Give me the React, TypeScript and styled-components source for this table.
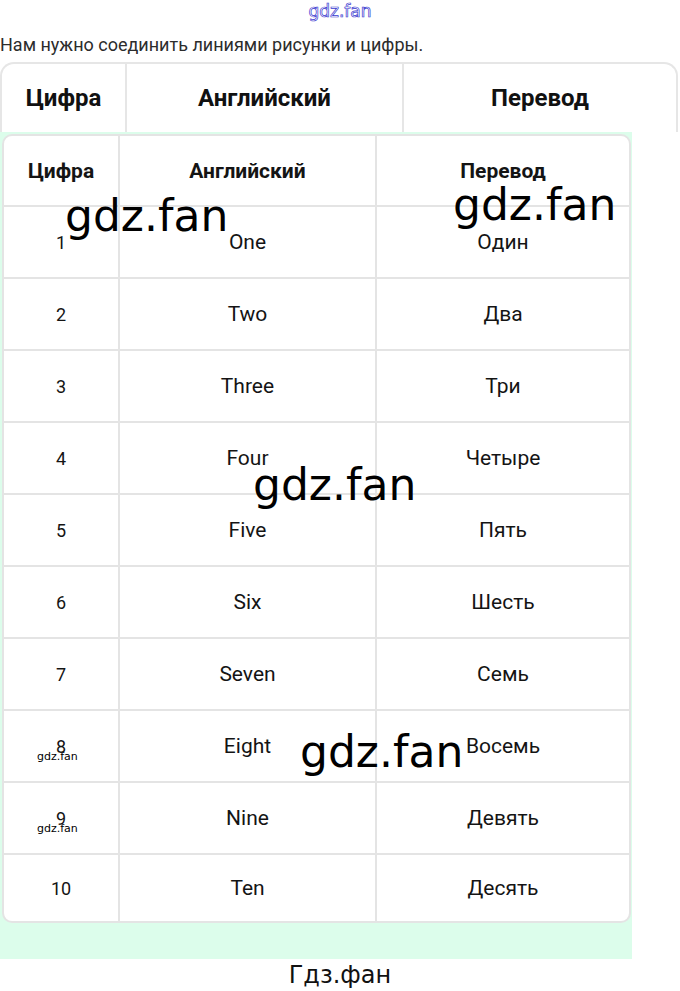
import styled, { createGlobalStyle } from 'styled-components'

const GlobalStyle = createGlobalStyle`
  body {
    margin: 0;
    background: #ffffff;
    font-family: Roboto, "Noto Sans", sans-serif;
  }
`

const Page = styled.div`
  position: relative;
  width: 680px;
  height: 991px;
  overflow: hidden;
  background: #fff;
`

const TopMark = styled.div`
  height: 28px;
  display: flex;
  justify-content: center;
  align-items: flex-start;
  padding-top: 1px;
  box-sizing: border-box;
  font-family: "DejaVu Sans", sans-serif;
  font-size: 17px;
  color: transparent;
  -webkit-text-stroke: 0.7px #3a3ad0;
`

const Intro = styled.p`
  margin: 0;
  height: 34px;
  font-size: 18px;
  line-height: 34px;
  color: #2c2c2c;
`

const HeadTable = styled.div`
  width: 678px;
  height: 70px;
  box-sizing: border-box;
  display: grid;
  grid-template-columns: 125px 277px 1fr;
  border: 2px solid #e6e6e6;
  border-bottom: none;
  border-radius: 14px 14px 0 0;
`

const HeadCell = styled.div<{ $last?: boolean }>`
  display: flex;
  align-items: center;
  justify-content: center;
  border-right: ${p => (p.$last ? 'none' : '2px solid #e6e6e6')};
  font-weight: 700;
  font-size: 24px;
  color: #111;
`

const Green = styled.div`
  width: 632px;
  background: #dcfdeb;
  padding: 2px 1px 36px 2px;
  box-sizing: border-box;
`

const Table = styled.div`
  background: #fff;
  border: 2px solid #e4e4e4;
  border-radius: 10px;
  overflow: hidden;
  display: grid;
  grid-template-columns: 116px 257px 1fr;
`

const Cell = styled.div<{ $h: number; $last?: boolean; $bottom?: boolean; $head?: boolean; $num?: boolean }>`
  height: ${p => p.$h}px;
  box-sizing: border-box;
  display: flex;
  align-items: center;
  justify-content: center;
  border-right: ${p => (p.$last ? 'none' : '2px solid #e4e4e4')};
  border-bottom: ${p => (p.$bottom ? 'none' : '2px solid #e4e4e4')};
  font-size: ${p => (p.$num ? 18 : 21)}px;
  font-weight: ${p => (p.$head ? 700 : 400)};
  color: #141414;
`

const Footer = styled.div`
  text-align: center;
  font-family: "DejaVu Sans", sans-serif;
  font-size: 24px;
  line-height: 32px;
  color: #111;
`

const Mark = styled.div<{ $x: number; $y: number; $small?: boolean }>`
  position: absolute;
  left: ${p => p.$x}px;
  top: ${p => p.$y}px;
  font-family: "DejaVu Sans", sans-serif;
  font-size: ${p => (p.$small ? 11 : 44)}px;
  line-height: 1;
  color: #000;
  pointer-events: none;
`

const rows: [string, string, string][] = [
  ['1', 'One', 'Один'],
  ['2', 'Two', 'Два'],
  ['3', 'Three', 'Три'],
  ['4', 'Four', 'Четыре'],
  ['5', 'Five', 'Пять'],
  ['6', 'Six', 'Шесть'],
  ['7', 'Seven', 'Семь'],
  ['8', 'Eight', 'Восемь'],
  ['9', 'Nine', 'Девять'],
  ['10', 'Ten', 'Десять'],
]

const App: React.FC = () => {
  return (
    <>
      <GlobalStyle />
      <Page>
        <TopMark>gdz.fan</TopMark>
        <Intro>Нам нужно соединить линиями рисунки и цифры.</Intro>
        <HeadTable>
          <HeadCell>Цифра</HeadCell>
          <HeadCell>Английский</HeadCell>
          <HeadCell $last>Перевод</HeadCell>
        </HeadTable>
        <Green>
          <Table>
            <Cell $h={71} $head>Цифра</Cell>
            <Cell $h={71} $head>Английский</Cell>
            <Cell $h={71} $head $last>Перевод</Cell>
            {rows.map((r, i) => {
              const end = i === rows.length - 1
              const h = end ? 66 : 72
              return [
                <Cell key={r[0] + 'a'} $h={h} $num $bottom={end}>{r[0]}</Cell>,
                <Cell key={r[0] + 'b'} $h={h} $bottom={end}>{r[1]}</Cell>,
                <Cell key={r[0] + 'c'} $h={h} $bottom={end} $last>{r[2]}</Cell>,
              ]
            })}
          </Table>
        </Green>
        <Footer>Гдз.фан</Footer>
        <Mark $x={65} $y={194}>gdz.fan</Mark>
        <Mark $x={453} $y={183}>gdz.fan</Mark>
        <Mark $x={253} $y={463}>gdz.fan</Mark>
        <Mark $x={300} $y={730}>gdz.fan</Mark>
        <Mark $x={37} $y={751} $small>gdz.fan</Mark>
        <Mark $x={37} $y={823} $small>gdz.fan</Mark>
      </Page>
    </>
  )
}

export default App
